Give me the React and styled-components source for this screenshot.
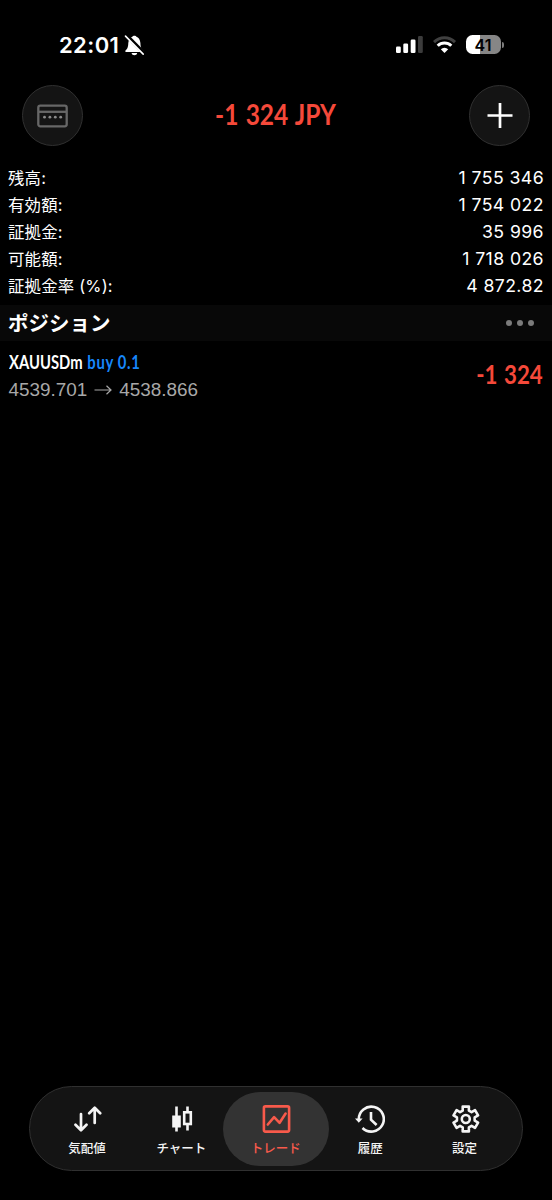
import React from 'react';
import styled, { createGlobalStyle } from 'styled-components';

const GlobalStyle = createGlobalStyle`
  * {
    box-sizing: border-box;
  }
  body {
    margin: 0;
    background: #000;
    color: #fff;
    font-family: Inter, "Noto Sans CJK JP", sans-serif;
  }
`;

const Screen = styled.div`
  display: flex;
  flex-direction: column;
  width: 552px;
  height: 1200px;
  overflow: hidden;
  background: #000;
`;

const StatusBar = styled.div`
  display: flex;
  align-items: center;
  justify-content: space-between;
  height: 85px;
  padding: 4px 48px 0 59px;
  svg {
    display: block;
  }
`;

const Clock = styled.div`
  display: flex;
  align-items: center;
  height: 24px;
  font-size: 22px;
  font-weight: 600;
  letter-spacing: 0.4px;
  gap: 4.5px;
`;

const Indicators = styled.div`
  display: flex;
  align-items: center;
  gap: 9.5px;
`;

const Battery = styled.div`
  display: flex;
  align-items: center;
  gap: 1px;
  &::after {
    content: '';
    width: 2px;
    height: 6px;
    border-radius: 0 2px 2px 0;
    background: #7c7c7c;
  }
`;

const BatteryLevel = styled.div`
  width: 35px;
  height: 19px;
  padding-right: 1px;
  border-radius: 6.5px;
  background: linear-gradient(to right, #fff 41%, #868686 41%);
  color: #000;
  font-size: 16px;
  font-weight: 600;
  line-height: 20px;
  text-align: center;
`;

const Header = styled.header`
  display: flex;
  align-items: center;
  justify-content: space-between;
  height: 61px;
  padding: 0 22px;
`;

const RoundButton = styled.button`
  display: flex;
  align-items: center;
  justify-content: center;
  width: 61px;
  height: 61px;
  padding: 0;
  border: 1px solid #303030;
  border-radius: 50%;
  background: #141414;
`;

// narrow face made from Lato, squeezed towards one edge
const Narrow = styled.span`
  display: inline-block;
  font-family: Lato, sans-serif;
  font-size: ${props => props.$size}px;
  font-weight: 700;
  line-height: 1.2;
  word-spacing: 1.5px;
  white-space: pre;
  color: ${props => props.$color};
  transform: scaleX(${props => props.$scale});
  transform-origin: ${props => props.$origin || 'left'} center;
`;

const Title = styled.h1`
  margin: 0;
  padding-bottom: 3px;
  line-height: 1;
`;

const Summary = styled.dl`
  margin: 18px 0 0;
  padding: 0 8px;
`;

const SummaryRow = styled.div`
  display: flex;
  align-items: center;
  justify-content: space-between;
  height: 27px;
`;

const Label = styled.dt`
  padding-top: 2px;
  font-size: 16.4px;
  letter-spacing: 0.2px;
  line-height: 27px;
`;

const Value = styled.dd`
  margin: 0;
  font-size: 17.7px;
  font-weight: 400;
  letter-spacing: 0.4px;
`;

const Section = styled.div`
  display: flex;
  align-items: center;
  justify-content: space-between;
  height: 36px;
  margin-top: 6px;
  padding: 0 18px 0 8px;
  background: #080808;
`;

const SectionTitle = styled.h2`
  margin: 0;
  padding-bottom: 3px;
  font-family: "Noto Sans CJK JP", sans-serif;
  font-size: 20.5px;
  font-weight: 700;
  line-height: 32px;
`;

const Dots = styled.div`
  display: flex;
  gap: 5px;
  i {
    width: 6px;
    height: 6px;
    border-radius: 50%;
    background: #7b7b7b;
  }
`;

const Position = styled.div`
  display: flex;
  align-items: center;
  justify-content: space-between;
  height: 66px;
  padding: 0 9px 0 8.5px;
`;

const Deal = styled.div`
  padding-top: 4px;
`;

const Symbol = styled.div`
  display: flex;
  align-items: center;
  height: 27px;
`;

const Side = styled.span`
  color: #1787fb;
  letter-spacing: 0.85px;
  word-spacing: 0;
`;

const Prices = styled.div`
  display: flex;
  align-items: center;
  gap: 7px;
  height: 27px;
  font-family: "Liberation Sans", sans-serif;
  font-size: 18.9px;
  color: #a8a8a8;
`;

const TabBar = styled.nav`
  display: flex;
  align-items: center;
  width: 494px;
  height: 85px;
  margin: auto 29px 29px;
  padding: 0 4px;
  border: 1px solid #303030;
  border-radius: 43px;
  background: #141414;
`;

const Tab = styled.div`
  display: flex;
  flex: none;
  flex-direction: column;
  align-items: center;
  width: 106px;
  height: 74px;
  padding-top: 12px;
  border-radius: 37px;
  background: ${props => (props.$active ? '#333' : 'transparent')};
  color: ${props => (props.$active ? '#f85a4b' : '#f4f4f4')};
  font-family: "Noto Sans CJK JP", sans-serif;
  font-size: 12.5px;
  font-weight: 500;
  line-height: 18px;
  & + & {
    margin-left: -11.6px;
  }
  svg {
    display: block;
    margin-bottom: 5px;
  }
`;

const BellOff = () => (
  <svg width="21" height="22" viewBox="0 0 21 22">
    <path d="M1.500 16.600c1.700-1.700 2.600-2.700 2.800-7.500C4.500 5.300 6.300 3.400 8.400 2.700c.4-1.400 3.600-1.400 4 0 2.100.7 3.800 2.600 4 6.400.2 4.800 1.100 5.800 2.900 7.500.6.6.3 1.400-.7 1.400H2.200c-1 0-1.300-.8-.7-1.400zM7.600 19h5.600c-.3 3-5.300 3-5.600 0z" fill="#fff" />
    <path d="M2.400 1.200l18 18.200" stroke="#000" strokeWidth="3.600" />
    <path d="M1.500 2.100l17.700 18" stroke="#fff" strokeWidth="1.600" strokeLinecap="round" />
  </svg>
);

const Signal = () => (
  <svg width="27" height="18" viewBox="0 0 27 18" fill="#fff">
    <rect x="0" y="10.500" width="4.800" height="6.500" rx="1.300" />
    <rect x="7.300" y="7.500" width="4.800" height="9.500" rx="1.300" />
    <rect x="14.700" y="3.500" width="4.800" height="13.500" rx="1.300" />
    <rect x="22" y="0" width="4.800" height="17" rx="1.300" fill="#3c3c3c" />
  </svg>
);

const Wifi = () => (
  <svg width="24" height="18" viewBox="0 0 24 18" fill="none" strokeWidth="3">
    <path d="M1 6.100a15 15 0 0 1 21 0" stroke="#404040" />
    <path d="M4.700 9.800a9.700 9.700 0 0 1 13.600 0" stroke="#fff" />
    <path d="M11.500 17l-3.700-3.800a5.300 5.300 0 0 1 7.400 0z" fill="#fff" />
  </svg>
);

const Keypad = () => (
  <svg width="31" height="24" viewBox="0 0 31 24" fill="none" stroke="#676767" strokeWidth="2.300">
    <rect x="1.300" y="1.700" width="28.400" height="20.600" rx="2" />
    <path d="M1.500 7.800h28" />
    <g fill="#8a8a8a" stroke="none">
      <circle cx="7.500" cy="13.200" r="1.400" />
      <circle cx="12.900" cy="13.200" r="1.400" />
      <circle cx="18.300" cy="13.200" r="1.400" />
      <circle cx="23.700" cy="13.200" r="1.400" />
    </g>
  </svg>
);

const Plus = () => (
  <svg width="26" height="26" viewBox="0 0 26 26" stroke="#fff" strokeWidth="2.700">
    <path d="M13 0v25M0.500 12.500h25" />
  </svg>
);

const Arrow = () => (
  <svg width="18" height="12" viewBox="0 0 18 12" fill="none" stroke="#a8a8a8" strokeWidth="1.200">
    <path d="M0.500 6h16.500M12.500 1.800l4.500 4.200-4.500 4.200" />
  </svg>
);

const QuotesIcon = () => (
  <svg width="30" height="30" viewBox="0 0 30 30" fill="none" stroke="currentColor" strokeWidth="2.700" strokeLinecap="round" strokeLinejoin="round">
    <path d="M9 10v16M3.500 20.700L9 26.200l5.500-5.500M22.700 19V4M17.200 9.300l5.500-5.500 5.500 5.500" />
  </svg>
);

const ChartIcon = () => (
  <svg width="30" height="30" viewBox="0 0 30 30" fill="none" stroke="currentColor" strokeWidth="2.600">
    <path d="M10.500 2.500v25M21.500 2.500v6M21.500 20v6.500" />
    <rect x="6.200" y="11.500" width="8.600" height="12" fill="currentColor" stroke="none" />
    <rect x="18.200" y="8.300" width="6.600" height="11.700" />
  </svg>
);

const TradeIcon = () => (
  <svg width="30" height="30" viewBox="0 0 30 30" fill="none" stroke="currentColor" strokeWidth="2.600" strokeLinejoin="round" strokeLinecap="round">
    <rect x="2.900" y="2.400" width="25.200" height="25.200" rx="1.500" />
    <path d="M6.800 20.500l6.300-7.300 5.500 5.600 6-9.300" />
  </svg>
);

const HistoryIcon = () => (
  <svg width="30" height="30" viewBox="0 0 30 30" fill="none" stroke="currentColor" strokeWidth="2.600">
    <path d="M3.800 15.500A12.500 12.500 0 1 1 7.500 24" />
    <path d="M0 14.600h7.600l-3.800 4.200z" fill="currentColor" stroke="none" />
    <path d="M16 8v7.800l5.600 5.200" />
  </svg>
);

// six teeth, each one a trapezoid between the root and the tip circle
const gearPoints = [];
for (let i = 0; i < 6; i++) {
  [[-20, 9], [-14, 12.8], [14, 12.8], [20, 9]].forEach(([offset, r]) => {
    const a = ((i * 60 + offset - 90) * Math.PI) / 180;
    gearPoints.push(`${(15.8 + r * Math.cos(a)).toFixed(2)},${(15 + r * Math.sin(a)).toFixed(2)}`);
  });
}

const SettingsIcon = () => (
  <svg width="30" height="30" viewBox="0 0 30 30" fill="none" stroke="currentColor" strokeWidth="2.600" strokeLinejoin="round">
    <polygon points={gearPoints.join(' ')} />
    <circle cx="15.800" cy="15" r="4" />
  </svg>
);

const summary = [
  ['残高:', '1 755 346'],
  ['有効額:', '1 754 022'],
  ['証拠金:', '35 996'],
  ['可能額:', '1 718 026'],
  ['証拠金率 (%):', '4 872.82'],
];

const tabs = [
  { label: '気配値', Icon: QuotesIcon },
  { label: 'チャート', Icon: ChartIcon },
  { label: 'トレード', Icon: TradeIcon, active: true },
  { label: '履歴', Icon: HistoryIcon },
  { label: '設定', Icon: SettingsIcon },
];

const App = () => (
  <Screen>
    <GlobalStyle />
    <StatusBar>
      <Clock>
        22:01
        <BellOff />
      </Clock>
      <Indicators>
        <Signal />
        <Wifi />
        <Battery>
          <BatteryLevel>41</BatteryLevel>
        </Battery>
      </Indicators>
    </StatusBar>
    <Header>
      <RoundButton><Keypad /></RoundButton>
      <Title>
        <Narrow $size={29} $scale={0.845} $color="#f5493a" $origin="center">-1 324 JPY</Narrow>
      </Title>
      <RoundButton><Plus /></RoundButton>
    </Header>
    <Summary>
      {summary.map(([label, value]) => (
        <SummaryRow key={label}>
          <Label>{label}</Label>
          <Value>{value}</Value>
        </SummaryRow>
      ))}
    </Summary>
    <Section>
      <SectionTitle>ポジション</SectionTitle>
      <Dots><i /><i /><i /></Dots>
    </Section>
    <Position>
      <Deal>
        <Symbol>
          <Narrow $size={18.5} $scale={0.8} $color="#fff">
            XAUUSDm <Side>buy 0.1</Side>
          </Narrow>
        </Symbol>
        <Prices>
          4539.701 <Arrow /> 4538.866
        </Prices>
      </Deal>
      <Narrow $size={27} $scale={0.825} $color="#f5493a" $origin="right">-1 324</Narrow>
    </Position>
    <TabBar>
      {tabs.map(({ label, Icon, active }) => (
        <Tab key={label} $active={active}>
          <Icon />
          {label}
        </Tab>
      ))}
    </TabBar>
  </Screen>
);

export default App;
